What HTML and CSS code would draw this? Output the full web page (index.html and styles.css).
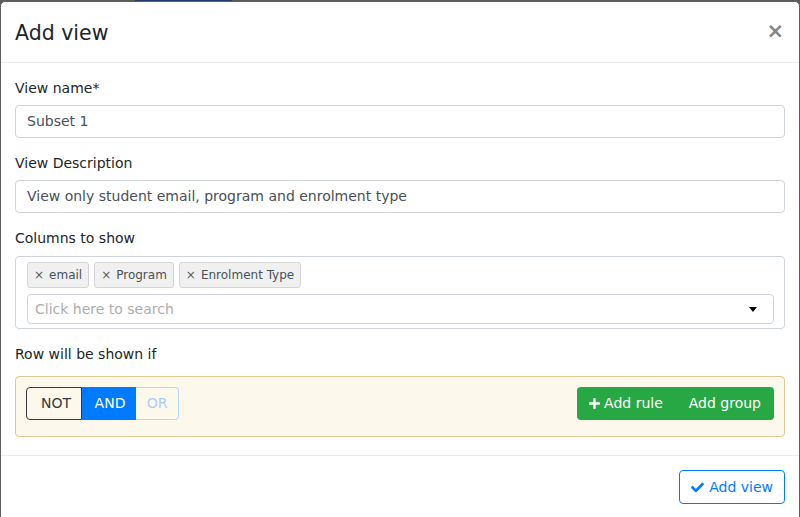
FILE: index.html
```html
<!DOCTYPE html>
<html>
<head>
<meta charset="utf-8">
<link rel="stylesheet" href="styles.css">
</head>
<body>
<div class="under"><span class="under-tab"></span></div>
<div class="modal">
  <div class="modal-header">
    <h5 class="modal-title">Add view</h5>
    <span class="close">×</span>
  </div>
  <div class="modal-body">
    <div class="form-group">
      <label class="label">View name*</label>
      <div class="form-control">Subset 1</div>
    </div>
    <div class="form-group">
      <label class="label">View Description</label>
      <div class="form-control">View only student email, program and enrolment type</div>
    </div>
    <div class="form-group">
      <label class="label">Columns to show</label>
      <div class="multiselect">
        <div class="tags">
          <span class="tag"><span class="tag-x">×</span>email</span>
          <span class="tag"><span class="tag-x">×</span>Program</span>
          <span class="tag"><span class="tag-x">×</span>Enrolment Type</span>
        </div>
        <div class="search">
          <span class="placeholder">Click here to search</span>
          <span class="caret"></span>
        </div>
      </div>
    </div>
    <div class="form-group last">
      <label class="label">Row will be shown if</label>
      <div class="qb">
        <div class="btn-group">
          <span class="btn btn-not">NOT</span>
          <span class="btn btn-and">AND</span>
          <span class="btn btn-or">OR</span>
        </div>
        <div class="btn-group green">
          <span class="btn btn-green"><svg class="ico-plus" viewBox="0 0 448 448"><path d="M416 176H272V32c0-17.67-14.33-32-32-32h-32c-17.67 0-32 14.330-32 32v144H32c-17.67 0-32 14.33-32 32v32c0 17.67 14.33 32 32 32h144v144c0 17.67 14.33 32 32 32h32c17.67 0 32-14.33 32-32V272h144c17.67 0 32-14.33 32-32v-32c0-17.670-14.33-32-32-32z" fill="#fff"/></svg>Add rule</span>
          <span class="btn btn-green">Add group</span>
        </div>
      </div>
    </div>
  </div>
  <div class="modal-footer">
    <span class="btn btn-outline"><svg class="ico-check" viewBox="0 0 512 512"><path d="M173.898 439.404l-166.4-166.4c-9.997-9.997-9.997-26.206 0-36.204l36.203-36.204c9.997-9.998 26.207-9.998 36.204 0L192 312.69 432.095 72.596c9.997-9.997 26.207-9.997 36.204 0l36.203 36.204c9.997 9.997 9.997 26.206 0 36.204l-294.4 294.401c-9.998 9.997-26.207 9.997-36.204-.001z" fill="#007bff"/></svg>Add view</span>
  </div>
</div>
</body>
</html>
```

FILE: styles.css
```css
* { box-sizing: border-box; }
html, body { margin: 0; padding: 0; }
body {
  background: #5b5b5b;
  font-family: "DejaVu Sans", sans-serif;
  font-size: 14px;
  line-height: 21px;
  color: #212529;
  height: 517px;
  overflow: hidden;
  position: relative;
}
.under {
  position: absolute;
  top: 0; left: 0; right: 0;
  height: 1px;
}
.under-tab {
  position: absolute;
  left: 135px;
  width: 97px;
  height: 1px;
  background: #1f3f6f;
}
.modal {
  margin-top: 1px;
  width: 800px;
  background: #fff;
  border: 1px solid #5f5f5f;
  border-radius: 5px 5px 0 0;
  height: 520px;
}
.modal-header {
  display: flex;
  align-items: center;
  padding: 15px 14px 13px 14px;
  border-bottom: 1px solid #e9ecef;
  height: 61px;
}
.modal-title {
  margin: 0;
  font-size: 20.5px;
  font-weight: 400;
  line-height: 30px;
  color: #212529;
}
.close {
  margin-left: auto;
  margin-right: 1px;
  margin-top: -4px;
  font-size: 21px;
  font-weight: 700;
  line-height: 1;
  color: #858585;
}
.modal-body {
  padding: 13px 14px 13px 14px;
}
.form-group { margin-bottom: 13px; }
.form-group.last { margin-bottom: 5px; }
.label {
  display: block;
  padding-top: 2px;
  margin-bottom: 6px;
  line-height: 21px;
}
.form-control {
  height: 33px;
  padding: 5px 11px;
  border: 1px solid #ced4da;
  border-radius: 4px;
  color: #495057;
  line-height: 21px;
}
.multiselect {
  margin-top: 7px;
  border: 1px solid #ced4da;
  border-radius: 4px;
  padding: 5px 10px 4px 11px;
  height: 73px;
}
.tags {
  display: flex;
  gap: 5px;
  height: 26px;
}
.tag {
  display: inline-flex;
  align-items: center;
  height: 26px;
  padding: 0 6px 0 6px;
  border: 1px solid #d4d4d4;
  border-radius: 3px;
  background: #f0f0f0;
  color: #495057;
  font-size: 12px;
}
.tag-x {
  font-size: 12px;
  margin-right: 5px;
  color: #5a5a5a;
}
.search {
  margin-top: 6px;
  height: 30px;
  border: 1px solid #ced4da;
  border-radius: 4px;
  display: flex;
  align-items: center;
  padding: 0 7px;
}
.placeholder { color: #adadad; font-size: 14px; }
.caret {
  margin-left: auto;
  margin-right: 9px;
  width: 0; height: 0;
  border-left: 4px solid transparent;
  border-right: 4px solid transparent;
  border-top: 5px solid #000;
}
.qb {
  margin-top: 11px;
  height: 61px;
  padding: 10px;
  border: 1px solid #dcc896;
  background: #fcf8ec;
  border-radius: 4px;
  display: flex;
  justify-content: space-between;
  align-items: flex-start;
}
.btn-group { display: flex; }
.btn {
  display: inline-flex;
  align-items: center;
  height: 33px;
  font-size: 14px;
  line-height: 21px;
  border: 1px solid transparent;
  white-space: nowrap;
}
.btn-not {
  width: 56px;
  justify-content: center;
  padding-left: 4px;
  border-color: #343a40;
  color: #343a40;
  border-radius: 4px 0 0 4px;
}
.btn-and {
  width: 54px;
  justify-content: center;
  padding-left: 2px;
  background: #007bff;
  border-color: #007bff;
  color: #fff;
}
.btn-or {
  width: 43px;
  justify-content: center;
  border-color: #b8d6f6;
  color: #a9cef6;
  border-radius: 0 4px 4px 0;
  border-left: none;
}
.green { border-radius: 4px; overflow: hidden; }
.btn-green {
  background: #28a745;
  color: #fff;
  padding: 0 12px 0 12px;
}
.btn-green:first-child { padding-left: 11px; padding-right: 12px; }
.ico-plus { width: 11px; height: 11px; margin-right: 4px; }
.modal-footer {
  border-top: 1px solid #e9ecef;
  padding: 14px 14px 14px 14px;
  display: flex;
  justify-content: flex-end;
}
.btn-outline {
  height: 34px;
  padding: 0 11px;
  border-color: #007bff;
  color: #007bff;
  border-radius: 4px;
}
.ico-check { width: 13px; height: 13px; margin-right: 5px; }
```
